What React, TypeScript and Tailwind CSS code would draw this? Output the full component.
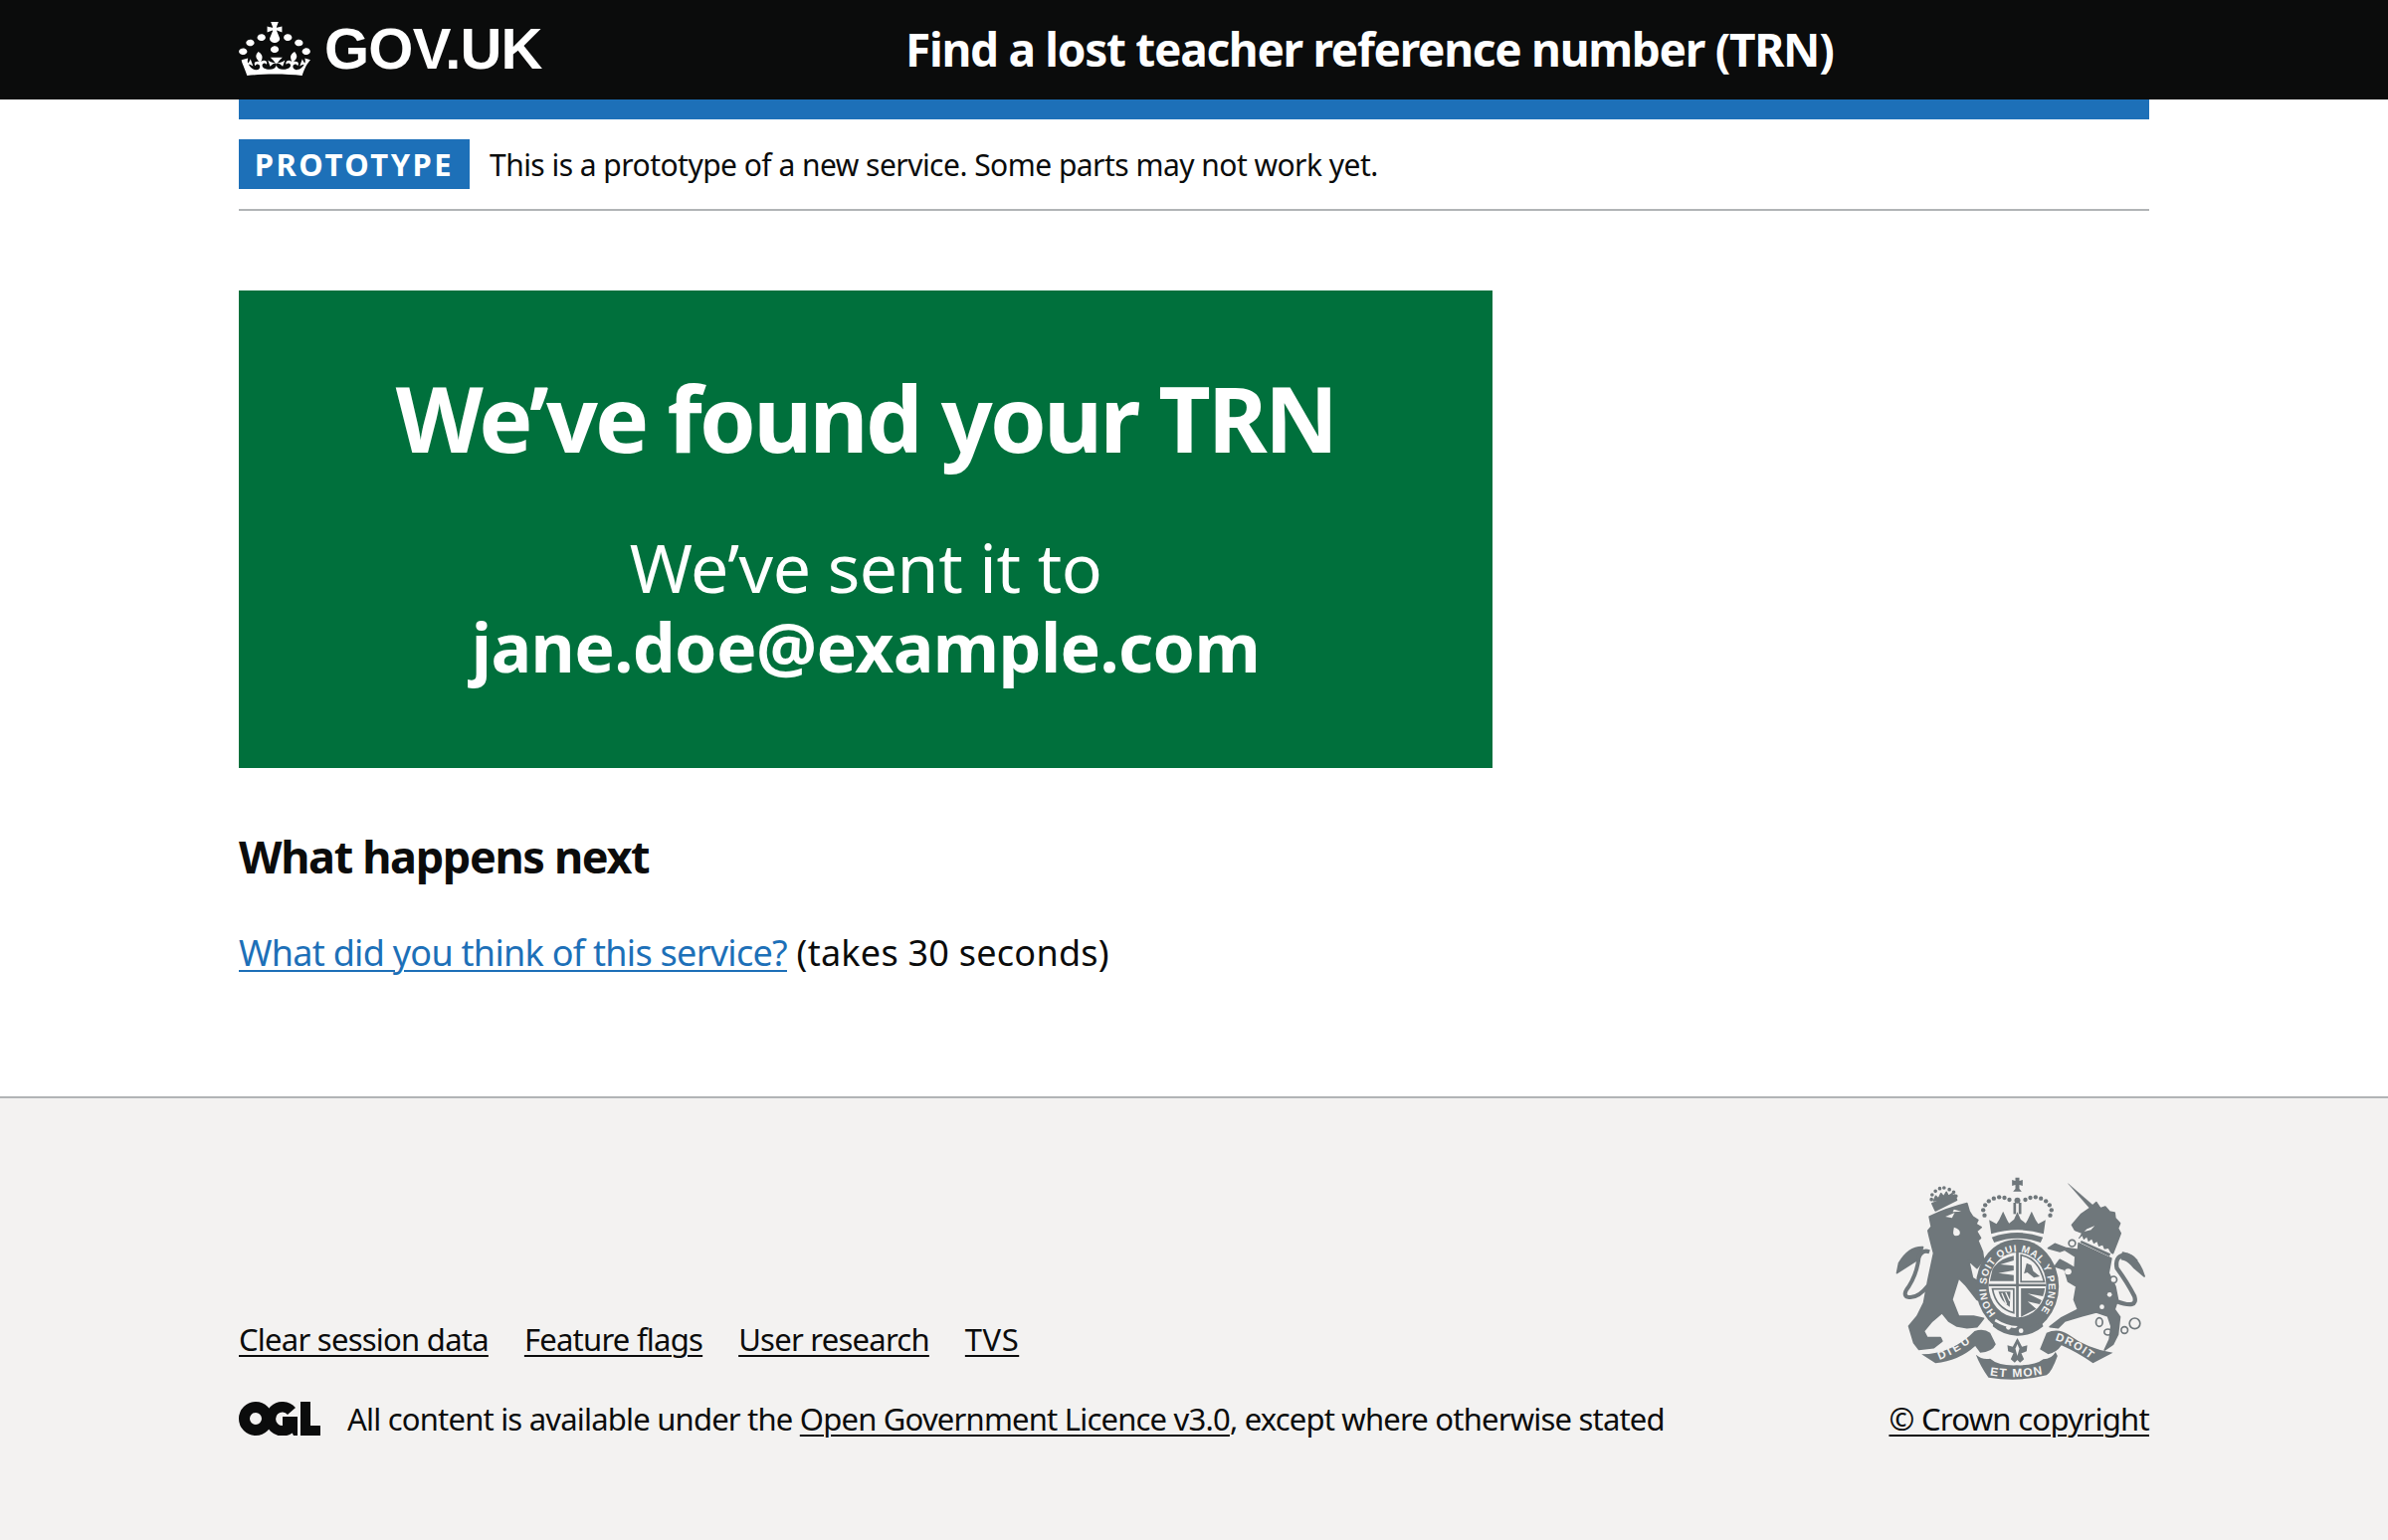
const font = "font-['Noto_Sans','Open_Sans',sans-serif]"

function Crown() {
    return (
        <svg viewBox="0 0 32 30" preserveAspectRatio="none" className="h-[54px] w-[72px] shrink-0" fill="#ffffff">
            <path d="M22.6 10.4c-1 .4-2-.1-2.4-1-.4-.9.1-2 1-2.4.9-.4 2-.1 2.4 1s-.1 2-1 2.4m-5.9 6.7c-.9.4-2-.1-2.4-1-.4-.9.1-2 1-2.4.9-.4 2-.1 2.4 1s-.1 2-1 2.4m10.8-3.7c-1 .4-2-.1-2.4-1-.4-.9.1-2 1-2.4.9-.4 2-.1 2.4 1s0 2-1 2.4m3.3 4.8c-1 .4-2-.1-2.4-1-.4-.9.1-2 1-2.4.9-.4 2-.1 2.4 1s-.1 2-1 2.4M17 4.7l2.3 1.2V2.5l-2.3.7-.2-.2.9-3h-3.4l.9 3-.2.2c-.1.1-2.3-.7-2.3-.7v3.4L15 4.7c.1.1.1.2.2.2l-1.3 4c-.1.2-.1.4-.1.6 0 1.1.8 2 1.9 2.2h.7c1-.2 1.9-1.1 1.9-2.2 0-.2 0-.4-.1-.6l-1.3-4c-.1-.1 0-.2.1-.2m-7.6 5.7c.9.4 2-.1 2.4-1 .4-.9-.1-2-1-2.4-.9-.4-2 .1-2.4 1s0 2 1 2.4m-5 3c.9.4 2-.1 2.4-1 .4-.9-.1-2-1-2.4-.9-.4-2 .1-2.4 1s.1 2 1 2.4m-3.2 4.8c.9.4 2-.1 2.4-1 .4-.9-.1-2-1-2.4-.9-.4-2 .1-2.4 1s0 2 1 2.4m14.8 11c4.4 0 8.6.3 12.3.8 1.1-4.5 2.4-7 3.7-8.8l-2.5-.9c.2 1.3.3 1.9 0 2.7-.4-.4-.8-1.1-1.1-2.3l-1.2 4c.7-.5 1.3-.8 2-.9-1.1 2.5-2.6 3.1-3.5 3-1.1-.2-1.7-1.2-1.5-2.1.3-1.2 1.5-1.5 2.1-.1 1.1-2.3-.8-3-2-2.3 1.9-1.9 2.1-3.5.6-5.6-2.1 1.6-2.1 3.2-1.2 5.5-1.2-1.4-3.2-.6-2.5 1.6.9-1.4 2.1-.5 1.9.8-.2 1.1-1.7 2.1-3.5 1.9-2.7-.2-2.9-2.1-2.9-3.6.7-.1 1.9.5 2.9 1.9l1-3.4c-1.1 1.1-2.1 1.4-3.2 1.4.4-1.2 2.1-3 2.1-3h-5.4s1.7 1.9 2.1 3c-1.1 0-2.1-.2-3.2-1.4l1 3.4c1-1.4 2.2-2 2.9-1.9-.1 1.5-.2 3.4-2.9 3.6-1.9.2-3.4-.8-3.5-1.9-.2-1.3 1-2.2 1.9-.8.7-2.3-1.2-3-2.5-1.6.9-2.2.9-3.9-1.2-5.5-1.5 2-1.3 3.7.6 5.6-1.2-.7-3.1 0-2 2.3.6-1.4 1.8-1.1 2.1.1.2.9-.3 1.9-1.5 2.1-.9.2-2.4-.5-3.5-3 .6 0 1.2.3 2 .9l-1.2-4c-.3 1.1-.7 1.9-1.1 2.3-.3-.8-.2-1.4 0-2.7l-2.9.9C1.3 23 2.6 25.5 3.7 30c3.7-.5 7.9-.8 12.3-.8" />
        </svg>
    )
}

function OglLogo() {
    return (
        <svg viewBox="0 0 82 34" className="h-[34px] w-[82px] shrink-0" fill="#0b0c0c">
            <circle cx="17" cy="17" r="11.5" fill="none" stroke="#0b0c0c" strokeWidth="11" />
            <path d="M53 9.5A12 12 0 1 0 53 25" fill="none" stroke="#0b0c0c" strokeWidth="10.5" />
            <path d="M44 15h15v19h-4l-2-4-9-2z" />
            <path d="M62 0h10v24h10v10H62z" />
        </svg>
    )
}

function RoyalArms() {
    const dots: [number, number][] = [
        [398, 186], [394, 170], [400, 155], [411, 143], [426, 135], [442, 131], [458, 133], [473, 139],
        [596, 186], [600, 170], [594, 155], [583, 143], [568, 135], [552, 131], [536, 133], [521, 139]
    ]
    const lionCrownDots: [number, number][] = [
        [238, 138], [240, 124], [250, 113], [276, 103], [292, 108], [305, 116], [312, 128], [263, 105]
    ]
    const rings: [number, number, number, number][] = [
        [662, 270, 10, 10], [787, 380, 10, 10], [744, 508, 10, 13],
        [770, 538, 11, 9], [820, 532, 10, 10], [851, 512, 16, 16]
    ]

    return (
        <svg viewBox="130 70 755 615" className="mr-[3px] h-[205px] w-[252px] shrink-0" fill="#6f777b">
            <defs>
                <path id="garterRing" d="M432 482A94 108 0 1 1 562 482" />
                <path id="scrollLeft" d="M262 622Q320 600 372 556" />
                <path id="scrollMid" d="M414 668Q495 682 584 662" />
                <path id="scrollRight" d="M610 562Q670 580 728 628" />
            </defs>

            {/* crown */}
            <path d="M491 72h12v10l10-3v18l-10-3v12l7 8h-26l7-8V94l-10 3V79l10 3z" />
            <circle cx="497" cy="141" r="9" />
            <rect x="485" y="148" width="8" height="34" />
            <rect x="501" y="148" width="8" height="34" />
            {dots.map(([cx, cy]) => <circle key={`${cx}-${cy}`} cx={cx} cy={cy} r="6.5" />)}
            <path d="M412 200l22 12 8-12 12-26 12 26 6 10 15-12 10-22 10 22 15 12 6-10 12-26 12 26 8 12 22-12-6 42q-76-24-158 0z" />
            <path d="M420 252q77-28 154 0l-7 16q-70-26-140 0z" />

            <g stroke="#6f777b" strokeWidth="5" strokeLinejoin="round">
                {/* lion */}
                <path d="M240 150l68-26 6 16-64 32z" />
                <path d="M245 142l6-14 8 8 8-16 8 10 8-14 6 12 12-8-2 14z" />
                {lionCrownDots.map(([cx, cy]) => <circle key={`${cx}-${cy}`} cx={cx} cy={cy} r="3" />)}
                <path d="M232 190Q285 165 345 150L352 174 362 190 378 200 372 212 388 222 374 234 386 254 378 262 392 296 395 320 375 345 350 322 362 375 395 395 408 425 395 450 375 440 340 395 320 375 300 440 320 490 365 490 395 497 385 510 375 522 345 525 315 520 290 505 270 480 240 505 215 535 225 555 265 555 270 565 245 585 200 590 185 570 170 520 195 490 215 450 228 380 245 300 232 250 228 232 238 220Z" />
                <path d="M212 282Q170 280 140 330L134 360Q165 340 202 316Z" />

                {/* unicorn */}
                <path d="M650 90L728 158 718 168Z" strokeWidth="1" />
                <path d="M662 215L690 182 716 164 735 147 747 165 762 160 775 175 790 178 792 195 806 210 800 225 808 240 800 262 785 300 750 284 684 254 690 240 720 232 745 205 730 215 705 225 690 240 672 232Z" />
                <path d="M682 270L780 316 772 360 792 400 800 440 790 470 806 492 800 545 785 575 760 592 775 560 780 520 770 490 735 478 690 490 640 505 620 525 595 522 630 495 680 470 668 440 675 400 650 385 640 350 610 340 625 320 645 330 670 345 672 310 640 290 625 295 590 285 610 272 645 285 680 290Z" />
                <path d="M815 298Q860 305 880 370L850 345Q830 320 812 318Z" />
            </g>

            <path d="M228 398Q195 440 165 432 150 425 170 400 195 360 200 312 210 288 232 296" fill="none" stroke="#6f777b" strokeWidth="12" />
            <path d="M280 190l28-12-8 16zM306 168l22 6-26 2zM306 222q18 6 18 16t-12 10q-10-2-8-14z" fill="#f3f2f1" />

            {/* unicorn collar, markings and chain */}
            <path d="M684 256l8-8 5 12 9-8 5 14 10-8 6 14 10-6 5 14 12-4 5 12 12-2 8 14-6 10-89-42z" fill="#f3f2f1" />
            <path d="M690 262l88 40-4 8-88-42z" />
            <path d="M668 232l22 8-6 12-18-10z" fill="#f3f2f1" />
            <ellipse cx="650" cy="356" rx="10" ry="9" fill="#f3f2f1" />
            <circle cx="775" cy="425" r="7" fill="#f3f2f1" />
            <circle cx="752" cy="462" r="7" fill="#f3f2f1" />
            {rings.map(([cx, cy, rx, ry]) => (
                <ellipse key={`${cx}-${cy}`} cx={cx} cy={cy} rx={rx} ry={ry} fill={cx === 787 || cx === 662 ? "#f3f2f1" : "none"} stroke="#6f777b" strokeWidth="5" />
            ))}
            <path d="M795 445Q862 470 850 430 830 390 797 345 790 310 820 305 840 305 855 325" fill="none" stroke="#6f777b" strokeWidth="13" />

            {/* shield */}
            <ellipse cx="497" cy="400" rx="125" ry="142" />
            <ellipse cx="497" cy="396" rx="87" ry="98" fill="#f3f2f1" />
            <rect x="493" y="298" width="8" height="196" />
            <rect x="410" y="393" width="174" height="7" />
            <path d="M422 348q22-32 64-40v14l-40 12 40 4v14l-46 8 46 6v18h-72z" />
            <path d="M508 306q52 8 70 80h-70z" fill="none" stroke="#6f777b" strokeWidth="5" />
            <path d="M525 330l14 6 6 18 20 16-18 4-20-16-10 4z" />
            <path d="M508 406h72q-2 14-6 24l-46-8 42 20-6 12-36-8 26 22-46 24z" />
            <path d="M422 408h64v72q-54-14-64-72z" fill="none" stroke="#6f777b" strokeWidth="5" />
            <path d="M440 416h36l-2 46q-26-16-34-46z" />
            <path d="M450 420l14 34M462 418l12 26" stroke="#f3f2f1" strokeWidth="4" fill="none" />
            <text fontFamily="Liberation Sans, sans-serif" fontWeight="700" fontSize="30" fill="#f3f2f1">
                <textPath href="#garterRing" textLength="478">HONI SOIT QUI MAL Y PENSE</textPath>
            </text>
            <path d="M425 505q30 16 72 20 40 2 72-20l6 16q-36 30-80 28-42-2-72-28z" />
            <path d="M432 498q30 20 66 22-4 6-8 6-32-2-62-20z" fill="#f3f2f1" />
            <circle cx="470" cy="524" r="7" fill="#f3f2f1" />
            <circle cx="508" cy="534" r="7" fill="#f3f2f1" />

            {/* motto scroll */}
            <path d="M208 605Q300 605 368 535 395 525 415 540L432 575Q420 600 385 600L370 580Q320 625 250 632Z" />
            <path d="M372 606Q390 622 415 618 440 640 495 638 550 640 575 620 600 620 612 598L618 610Q600 660 585 668 500 690 410 675 385 640 372 606Z" />
            <path d="M565 590L585 540Q620 525 650 545 710 590 785 600L725 632Q680 600 630 578 615 600 590 605Z" />
            <path d="M497 556l14 26 16-4-2 18-16 6 8 18-12 10-8-8-8 8-12-10 8-18-16-6-2-18 16 4z" />
            <path d="M497 574l6 14-6 22-6-22z" fill="#f3f2f1" />
            <text fontFamily="Liberation Sans, sans-serif" fontWeight="700" fontSize="34" fill="#f3f2f1">
                <textPath href="#scrollLeft" textLength="108">DIEU</textPath>
            </text>
            <text fontFamily="Liberation Sans, sans-serif" fontWeight="700" fontSize="36" fill="#f3f2f1">
                <textPath href="#scrollMid" textLength="160">ET MON</textPath>
            </text>
            <text fontFamily="Liberation Sans, sans-serif" fontWeight="700" fontSize="34" fill="#f3f2f1">
                <textPath href="#scrollRight" textLength="122">DROIT</textPath>
            </text>
        </svg>
    )
}

export default function App() {
    return (
        <div className={`min-h-[1548px] bg-white text-[#0b0c0c] ${font}`}>

            <header className="h-[100px] bg-[#0b0c0c]">
                <div className="mx-auto flex h-full w-[1920px] items-center pb-[2px] text-white">
                    <div className="flex w-[670px] items-center gap-[14px]">
                        <Crown />
                        <span className="font-['Liberation_Sans',sans-serif] text-[58px] leading-none font-bold tracking-[-0.8px]">
                            GOV.UK
                        </span>
                    </div>
                    <span className="text-[46px] font-bold tracking-[-1.3px]">
                        Find a lost teacher reference number (TRN)
                    </span>
                </div>
            </header>

            <div className="mx-auto w-[1920px]">

                <div className="h-5 bg-[#1d70b8]" />

                <div className="mt-5 flex items-center gap-5 border-b-2 border-[#b1b4b6] pb-5">
                    <strong className="flex h-[50px] w-[232px] items-center justify-center bg-[#1d70b8] text-[31px] font-bold tracking-[2.5px] text-white">
                        PROTOTYPE
                    </strong>
                    <span className="text-[30px] tracking-[-0.53px]">
                        This is a prototype of a new service. Some parts may not work yet.
                    </span>
                </div>

                <main className="pt-[80px] pb-[119px]">

                    <div className="flex h-[480px] w-[1260px] flex-col items-center bg-[#00703c] pt-[70px] text-center text-white">
                        <h1 className="text-[91px] leading-[116px] font-bold tracking-[-2.75px]">
                            We’ve found your TRN
                        </h1>
                        <div className="mt-[52px] text-[68px] leading-[80px] tracking-[-0.5px]">
                            We’ve sent it to
                            <br />
                            <strong className="font-bold tracking-[-0.6px]">jane.doe@example.com</strong>
                        </div>
                    </div>

                    <h2 className="mt-[59px] text-[45px] leading-[60px] font-bold tracking-[-1.35px]">
                        What happens next
                    </h2>

                    <p className="mt-[42px] text-[36px] leading-[50px] tracking-[0.25px]">
                        <a className="tracking-[-0.72px] text-[#1d70b8] underline decoration-2 underline-offset-4">What did you think of this service?</a>
                        {" "}(takes 30 seconds)
                    </p>

                </main>
            </div>

            <footer className="h-[447px] border-t-2 border-[#b1b4b6] bg-[#f3f2f1] pt-[79px]">
                <div className="mx-auto flex w-[1920px] items-end justify-between">

                    <div className="pb-[4px]">
                        <div className="flex gap-[36px] text-[31px] leading-[40px] tracking-[-0.75px]">
                            <a className="underline decoration-2 underline-offset-4">Clear session data</a>
                            <a className="underline decoration-2 underline-offset-4">Feature flags</a>
                            <a className="underline decoration-2 underline-offset-4">User research</a>
                            <a className="tracking-[0.5px] underline decoration-2 underline-offset-4">TVS</a>
                        </div>
                        <div className="mt-[40px] flex items-center gap-[27px] text-[31px] leading-[40px] tracking-[-0.8px]">
                            <OglLogo />
                            <span>
                                All content is available under the{" "}
                                <a className="underline decoration-2 underline-offset-4">Open Government Licence v3.0</a>
                                , except where otherwise stated
                            </span>
                        </div>
                    </div>

                    <div className="flex flex-col items-end">
                        <RoyalArms />
                        <a className="mt-[18px] pb-[4px] text-[31px] leading-[40px] tracking-[-0.7px] underline decoration-2 underline-offset-4">
                            © Crown copyright
                        </a>
                    </div>

                </div>
            </footer>

        </div>
    )
}
